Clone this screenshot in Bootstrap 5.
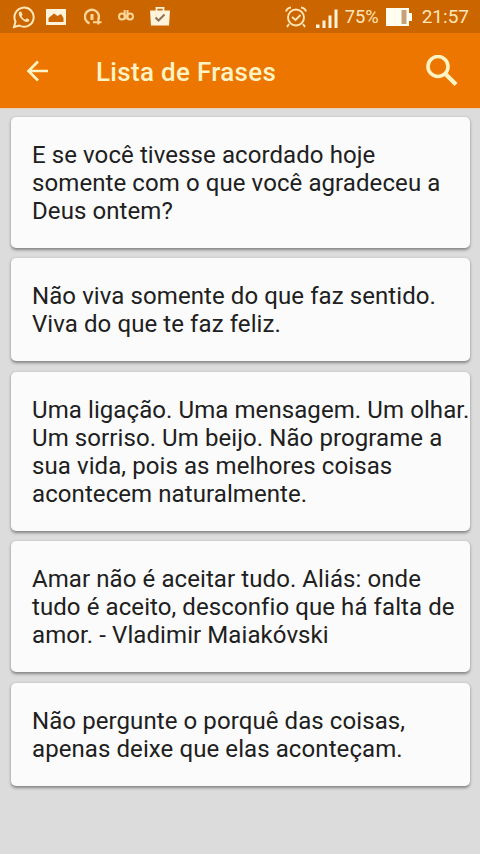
<!DOCTYPE html>
<html lang="pt-BR">
<head>
<meta charset="utf-8">
<meta name="viewport" content="width=device-width, initial-scale=1">
<title>Lista de Frases</title>
<link href="https://cdn.jsdelivr.net/npm/bootstrap@5.3.0/dist/css/bootstrap.min.css" rel="stylesheet">
<style>
body{font-family:Roboto,sans-serif;background:#dcdcdc;color:#202020;min-height:854px;overflow:hidden}
svg{display:block;flex:none}
.status{height:33px;background:#cb6500;color:#ffe6b8;padding:0 11px 0 12px}
.status-text{font-size:19px;line-height:33px;white-space:nowrap}
.percent{font-size:18.3px;margin:0 7px 0 7px}
.clock{margin-left:10px}
.appbar{height:75px;background:#ec7600;color:#fff3c4;padding:0 22px 0 26px;box-shadow:0 1px 1px #e9cdb8}
.title{font-size:26px;font-weight:500;line-height:30px;letter-spacing:.3px;margin:3px 0 0 47px;white-space:nowrap}
.phrases{padding:9px 10.5px;gap:10.5px}
.phrase{background:#fbfbfb;border:0;border-radius:5px;box-shadow:0 1.5px 3px rgba(0,0,0,.4);padding:23.8px 0 22.9px 21.5px}
.phrase p{font-size:24px;line-height:28.1px;letter-spacing:.085px;white-space:nowrap}
</style>
</head>
<body>
<div class="status d-flex align-items-center justify-content-between">
  <div class="d-flex align-items-center">
    <svg width="24" height="24" viewBox="0 0 24 24" fill="none" stroke="currentColor" stroke-width="2"><path d="M2 22l1.500-5.500A9.600 9.600 0 1 1 7.300 20.500z"/><path d="M8 6.500c-2 1-1.500 4 1 6.800s5.500 4.500 7.500 3.200c1-.8 1-1.800.6-2l-2.300-1.200-1.500 1.500c-1.800-.8-3-2-3.700-3.700l1-1.200-1.100-2.800c-.2-.5-.8-.8-1.500-.6z" fill="currentColor" stroke="none"/></svg>
    <svg class="ms-2 me-3" width="24" height="24" viewBox="0 0 24 24"><path fill="#fff3dc" fill-rule="evenodd" d="M2 4h20v16H2zM4.500 17h15v-4l-2.500-4-3.500 2-3.500-2.500-5.500 4.500z"/></svg>
    <svg width="18" height="24" viewBox="0 0 18 24" fill="none" stroke="#ffd79b" stroke-width="2.400"><path d="M5.500 18.300A7 7 0 1 1 14.300 14.500"/><path d="M8 9v6" stroke-width="3"/><path d="M9 17.300h8.500M14.300 14v5.500" stroke-width="2"/></svg>
    <svg class="ms-3" width="16" height="24" viewBox="0 0 16 24" fill="none" stroke="#ffd79b" stroke-width="2"><circle cx="4" cy="11.500" r="3"/><circle cx="12" cy="11.500" r="3"/><path d="M6.700 5v9.500M9.500 5v9.500"/></svg>
    <svg class="ms-3" width="20" height="24" viewBox="0 0 20 24"><path fill="#fff3dc" d="M0 5.500h20l-1 15H1z"/><path d="M6.500 6V2.800h7V6" fill="none" stroke="#fff3dc" stroke-width="1.800"/><path d="M5.500 12.500l3 3 6-6" fill="none" stroke="#8d7456" stroke-width="2"/></svg>
  </div>
  <div class="d-flex align-items-center">
    <svg width="24" height="24" viewBox="0 0 24 24" fill="none" stroke="currentColor" stroke-width="1.900"><circle cx="12" cy="12.500" r="8"/><path d="M8 12l3.500 3 5-5M2 6.500Q3 3 7 2.500M22 6.500Q21 3 17 2.500M5 19l-2 3M19 19l2 3"/></svg>
    <svg class="ms-2" width="22" height="24" viewBox="0 0 22 24" fill="#fff3dc"><path d="M0 19.500h3.500V23H0zM6.500 15.500h3V23h-3zM12.500 10.500h3V23h-3zM18.500 4.500h3V23h-3z"/></svg>
    <span class="status-text percent">75%</span>
    <svg width="26" height="18" viewBox="0 0 26 18"><path fill="#fffdf0" d="M0 0h23v5h3v8h-3v5H0z"/><path fill="#c4a07c" d="M15.500 2h5v14h-5z"/></svg>
    <span class="status-text clock">21:57</span>
  </div>
</div>
<nav class="appbar d-flex align-items-center">
  <svg width="23" height="22" viewBox="0 0 23 22" fill="none" stroke="currentColor" stroke-width="2.600"><path d="M22 11H2.500M12 1.500L2.500 11l9.500 9.500"/></svg>
  <h1 class="title">Lista de Frases</h1>
  <svg class="ms-auto" width="32" height="32" viewBox="0 0 32 32" fill="none" stroke="currentColor"><circle cx="12" cy="11.500" r="10" stroke-width="3.600"/><path d="M19 18.500l11 11" stroke-width="4.300"/></svg>
</nav>
<main class="phrases d-flex flex-column">
  <article class="card phrase"><p class="mb-0">E se você tivesse acordado hoje<br>somente com o que você agradeceu a<br>Deus ontem?</p></article>
  <article class="card phrase"><p class="mb-0">Não viva somente do que faz sentido.<br>Viva do que te faz feliz.</p></article>
  <article class="card phrase"><p class="mb-0">Uma ligação. Uma mensagem. Um olhar.<br>Um sorriso. Um beijo. Não programe a<br>sua vida, pois as melhores coisas<br>acontecem naturalmente.</p></article>
  <article class="card phrase"><p class="mb-0">Amar não é aceitar tudo. Aliás: onde<br>tudo é aceito, desconfio que há falta de<br>amor. - Vladimir Maiakóvski</p></article>
  <article class="card phrase"><p class="mb-0">Não pergunte o porquê das coisas,<br>apenas deixe que elas aconteçam.</p></article>
</main>
<script src="https://cdn.jsdelivr.net/npm/bootstrap@5.3.0/dist/js/bootstrap.bundle.min.js"></script>
</body>
</html>
